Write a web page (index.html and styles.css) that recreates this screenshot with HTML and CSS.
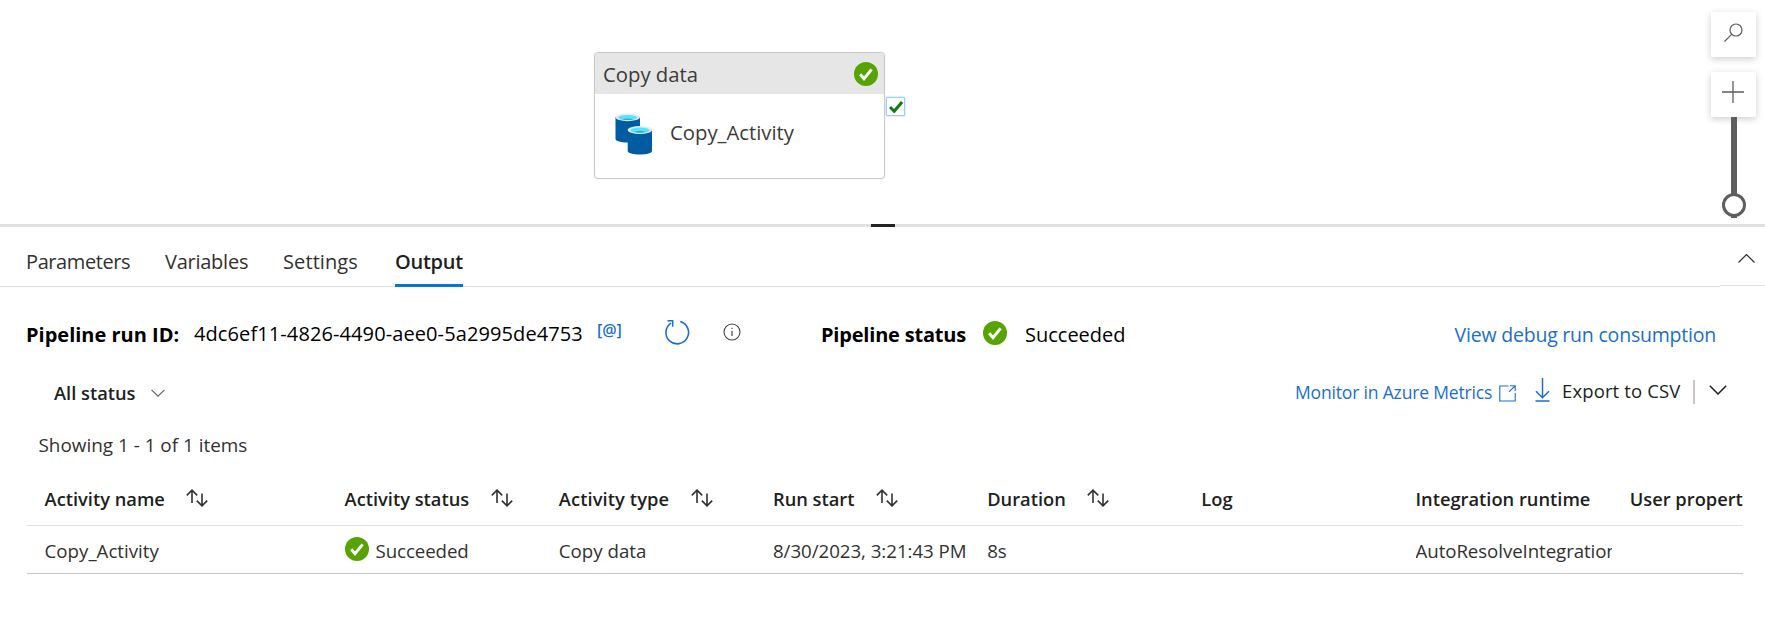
FILE: index.html
```html
<!DOCTYPE html>
<html lang="en">
<head>
<meta charset="utf-8">
<title>Pipeline output</title>
<link rel="stylesheet" href="styles.css">
</head>
<body>
<svg class="defs" width="0" height="0" aria-hidden="true">
  <symbol id="ok" viewBox="0 0 24 24"><circle cx="12" cy="12" r="12" fill="#57a300"/><path d="M6.2 12.2l3.8 4.5 7.6-9.4" fill="none" stroke="#fff" stroke-width="2.9"/></symbol>
  <symbol id="sort" viewBox="0 0 22 18"><path d="M6 14V1.2M.8 6.4L6 1.2l5.2 5.2M16 4.5v12.3M10.8 11.6l5.2 5.2 5.2-5.2" fill="none" stroke="#323130" stroke-width="1.6"/></symbol>
</svg>

<main class="page">
  <section class="canvas">
    <div class="node">
      <div class="node-head"><span>Copy data</span><svg class="check"><use href="#ok"/></svg></div>
      <div class="node-body">
        <svg class="db" viewBox="0 0 38 42">
          <path d="M.5 4v22c0 2 5.500 3.600 12 3.600S25 28 25 26V4z" fill="#005ba1"/>
          <ellipse cx="12.700" cy="4.300" rx="12.200" ry="3.900" fill="#e8e8e8"/>
          <ellipse cx="12.700" cy="4.600" rx="9.500" ry="2.700" fill="#50e6ff"/>
          <path d="M7 6.200c3-1 8.500-1 11.500 0-3.500 1.200-8 1.200-11.500 0z" fill="#32a8cc"/>
          <path d="M12.700 17v21c0 2 5.500 3.600 12.200 3.600S37 40 37 38V17z" fill="#005ba1"/>
          <ellipse cx="24.900" cy="17" rx="12.200" ry="4" fill="#e8e8e8"/>
          <ellipse cx="24.900" cy="17.200" rx="9.500" ry="2.800" fill="#50e6ff"/>
          <path d="M19.200 18.800c3-1 8.500-1 11.500 0-3.500 1.200-8 1.200-11.500 0z" fill="#32a8cc"/>
        </svg>
        <span>Copy_Activity</span>
      </div>
    </div>
    <div class="port"><svg viewBox="0 0 14 12" width="14" height="12"><path d="M1 6l4.200 4.300L13 1" fill="none" stroke="#107c10" stroke-width="3"/></svg></div>
    <div class="tools">
      <div class="tool search"><svg viewBox="0 0 19 19" width="19" height="19"><circle cx="12" cy="7" r="6" fill="none" stroke="#605e5c" stroke-width="1.200"/><path d="M7.700 11.300L.5 18.500" stroke="#605e5c" stroke-width="1.200"/></svg></div>
      <div class="tool plus"><svg viewBox="0 0 22 22" width="22" height="22"><path d="M11 0v22M0 11h22" stroke="#605e5c" stroke-width="1.300"/></svg></div>
      <svg class="slider" viewBox="0 0 24 101" width="24" height="101"><path d="M12 0v101" stroke="#605e5c" stroke-width="6"/><circle cx="12" cy="88" r="10.500" fill="#fff" stroke="#605e5c" stroke-width="3"/></svg>
    </div>
  </section>
  <div class="splitter"><div class="grip"></div></div>

  <nav class="tabs">
    <div class="tab t-param">Parameters</div>
    <div class="tab t-var">Variables</div>
    <div class="tab t-set">Settings</div>
    <div class="tab t-out">Output</div>
    <div class="collapse"><svg viewBox="0 0 17 9" width="17" height="9"><path d="M.5 8.500l8-8 8 8" fill="none" stroke="#323130" stroke-width="1.200"/></svg></div>
  </nav>

  <section class="info">
    <b class="run-label">Pipeline run ID:</b>
    <span class="run-id">4dc6ef11-4826-4490-aee0-5a2995de4753</span>
    <span class="at">[@]</span>
    <svg class="refresh" viewBox="0 0 26 26"><path d="M16.200 2.600A11.300 11.300 0 1 1 7 4.100" fill="none" stroke="#1a6fc9" stroke-width="1.600"/><path d="M3.500 1.700h5.200v6" fill="none" stroke="#1a6fc9" stroke-width="1.500"/></svg>
    <svg class="about" viewBox="0 0 18 18"><circle cx="9" cy="9" r="8" fill="none" stroke="#484644" stroke-width="1.100"/><path d="M9 7.700v5.300M9 4.700v1.400" stroke="#484644" stroke-width="1.200"/></svg>
    <b class="status-label">Pipeline status</b>
    <svg class="check"><use href="#ok"/></svg>
    <span class="status">Succeeded</span>
    <a class="debug">View debug run consumption</a>
  </section>

  <section class="filter">
    <span class="all">All status</span>
    <svg class="chev-s" viewBox="0 0 14 8"><path d="M.5.8L7 7.200 13.500.8" fill="none" stroke="#605e5c" stroke-width="1.100"/></svg>
    <a class="monitor">Monitor in Azure Metrics</a>
    <svg class="ext" viewBox="0 0 17 17"><path d="M9.500 1H.8v15h15.400V8M11 .8h5.200V6M16 1l-6 5.800" fill="none" stroke="#1a6fc9" stroke-width="1.100"/></svg>
    <svg class="down" viewBox="0 0 15 24"><path d="M7.500 0v19.500M1 13.300l6.500 6.500 6.500-6.500M.5 23h14" fill="none" stroke="#1a6fc9" stroke-width="1.500"/></svg>
    <span class="export">Export to CSV</span>
    <i class="bar"></i>
    <svg class="chev" viewBox="0 0 18 10"><path d="M.8.8L9 9 17.200.8" fill="none" stroke="#201f1e" stroke-width="1.500"/></svg>
  </section>

  <div class="count">Showing 1 - 1 of 1 items</div>

  <section class="table">
    <div class="row head">
      <div class="cell">Activity name<svg class="sort"><use href="#sort"/></svg></div>
      <div class="cell">Activity status<svg class="sort"><use href="#sort"/></svg></div>
      <div class="cell type">Activity type<svg class="sort"><use href="#sort"/></svg></div>
      <div class="cell">Run start<svg class="sort"><use href="#sort"/></svg></div>
      <div class="cell">Duration<svg class="sort"><use href="#sort"/></svg></div>
      <div class="cell">Log</div>
      <div class="cell">Integration runtime</div>
      <div class="cell">User propert</div>
    </div>
    <div class="row data">
      <div class="cell">Copy_Activity</div>
      <div class="cell"><svg class="check"><use href="#ok"/></svg><span class="ok-text">Succeeded</span></div>
      <div class="cell">Copy data</div>
      <div class="cell date">8/30/2023, 3:21:43 PM</div>
      <div class="cell">8s</div>
      <div class="cell"></div>
      <div class="cell"><span class="clip">AutoResolveIntegration</span></div>
      <div class="cell"></div>
    </div>
  </section>
</main>
</body>
</html>
```
FILE: styles.css
```css
* { box-sizing: border-box; }
body { margin: 0; background: #fff; color: #323130; font: 20px/28px "Open Sans", "Noto Sans", sans-serif; }
svg { display: block; flex: none; }
.defs { position: absolute; }
.page { width: 1765px; height: 619px; overflow: hidden; white-space: nowrap; }
.check { width: 24px; height: 24px; }

.canvas { position: relative; height: 224px; }
.node { position: absolute; left: 594px; top: 52px; width: 291px; height: 127px; border: 1.500px solid #c8c8c8; border-radius: 4px; overflow: hidden; font-size: 20.300px; color: #3b3a39; box-shadow: 0 0 1px #c8c8c8; }
.node-head { display: flex; justify-content: space-between; height: 41px; padding: 9px 6px 0 8px; background: #e6e6e6; }
.node-head span { line-height: 24px; }
.node-body { display: flex; padding: 19px 0 0 20px; }
.db { width: 38px; height: 42px; }
.node-body span { margin-left: 17px; padding-top: 5px; }
.port { position: absolute; left: 886px; top: 97px; width: 19px; height: 19px; display: flex; align-items: center; justify-content: center; background: #fff; border: 1px solid #9fcdf2; border-radius: 1px; box-shadow: 0 0 2px #8fc4f0; }
.tools { position: absolute; right: 9px; top: 12px; width: 45px; }
.tool { display: flex; height: 45px; background: #fff; box-shadow: 0 2px 7px rgba(0, 0, 0, .2); }
.search { padding: 11px 0 0 13px; margin-bottom: 15px; }
.plus { padding: 9px 0 0 11px; }
.slider { margin-left: 11px; }

.splitter { height: 3px; background: #e1e1e1; }
.grip { width: 24px; height: 3px; margin-left: 871px; background: #252423; }

.tabs { display: flex; height: 60px; padding-left: 26px; background: linear-gradient(#e1dfdd, #e1dfdd) 0 59px / 1720px 1px no-repeat; }
.tab { height: 60px; padding-top: 21px; }
.t-param { width: 139px; letter-spacing: -.4px; }
.t-var { width: 118px; letter-spacing: -.25px; }
.t-set { width: 112px; letter-spacing: .1px; }
.t-out { width: 68px; border-bottom: 3px solid #0078d4; font-weight: 600; color: #201f1e; letter-spacing: -.25px; }
.collapse { width: 45px; height: 59px; margin-left: auto; padding: 27px 0 0 18px; border-bottom: 1px solid #e1dfdd; }

.info { display: flex; align-items: flex-start; height: 92px; padding: 34px 49px 0 26px; color: #000; }
.run-label { width: 168px; }
.run-id { width: 403px; margin-top: -1px; letter-spacing: .1px; }
.at { width: 67px; margin-top: -5px; font-size: 16px; font-weight: 600; color: #1a6fc9; }
.refresh { width: 26px; height: 26px; margin-top: -2px; }
.about { width: 18px; height: 18px; margin: 2px 0 0 33px; }
.status-label { width: 162px; margin-left: 80px; letter-spacing: -.2px; }
.info .check { margin-top: 0; }
.status { margin-left: 18px; }
.debug { margin-left: auto; font-size: 19.500px; letter-spacing: -.21px; color: #1a6fc9; }

.filter { display: flex; align-items: flex-start; height: 52px; padding-left: 54px; }
.all { width: 97px; font-size: 18.300px; font-weight: 600; color: #201f1e; }
.chev-s { width: 14px; height: 8px; margin-top: 10px; }
.monitor { width: 204px; margin-left: 1130px; margin-top: -1px; font-size: 17.500px; letter-spacing: -.17px; color: #1a6fc9; }
.ext { width: 17px; height: 17px; margin-top: 6px; }
.down { width: 15px; height: 24px; margin: -1px 0 0 19px; }
.export { width: 131px; margin: -2px 0 0 12px; font-size: 18.500px; letter-spacing: .13px; color: #201f1e; }
.bar { width: 2px; height: 24px; margin-top: 1px; background: #c8c6c4; }
.chev { width: 18px; height: 10px; margin: 6px 0 0 14px; }

.count { height: 45px; padding-left: 38.500px; font-size: 18.900px; }

.table { width: 1716px; margin-left: 27px; overflow: hidden; font-size: 18.700px; }
.row { display: grid; grid-template-columns: 300px repeat(6, 214.200px) 300px; width: 1900px; padding-left: 17.600px; }
.cell { display: flex; }
.head { height: 50px; padding-top: 9px; border-bottom: 1px solid #e1dfdd; font-size: 18.300px; font-weight: 600; color: #201f1e; }
.type { letter-spacing: .1px; }
.sort { width: 22px; height: 18px; margin: 4px 0 0 21.500px; }
.data { height: 48px; padding-top: 11px; border-bottom: 1px solid #c8c6c4; }
.ok-text { margin-left: 7px; letter-spacing: -.1px; }
.date { letter-spacing: -.04px; }
.clip { width: 196px; overflow: hidden; letter-spacing: -.08px; }
```
